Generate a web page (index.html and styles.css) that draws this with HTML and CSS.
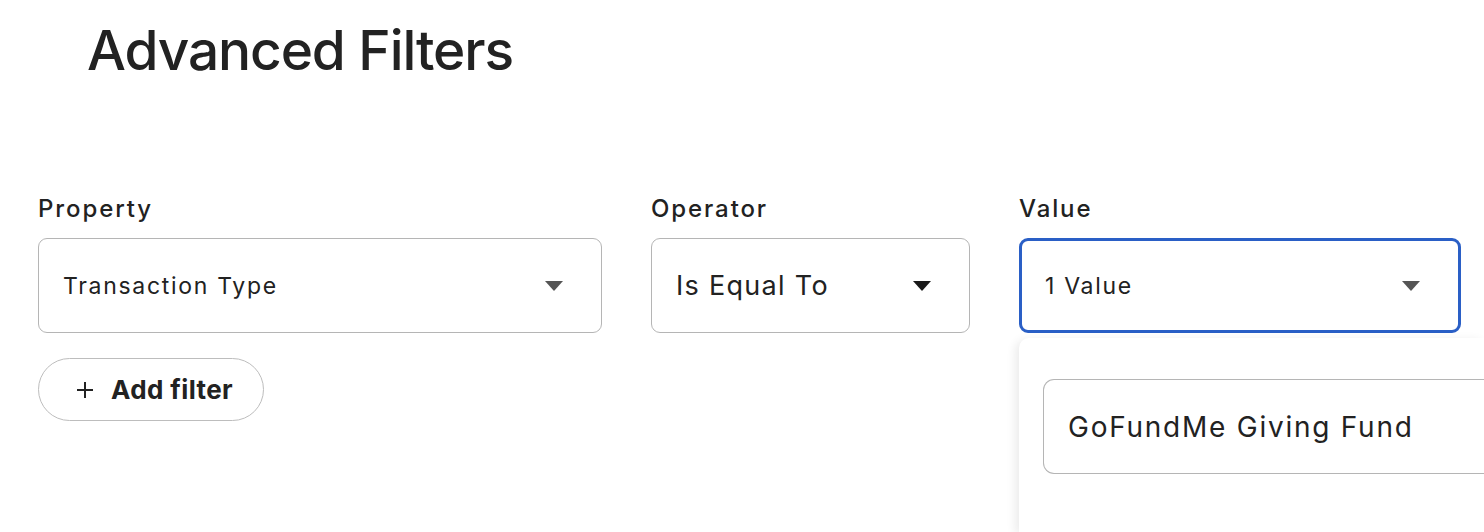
FILE: index.html
```html
<!DOCTYPE html>
<html lang="en">

<head>
    <meta charset="UTF-8">
    <meta name="viewport" content="width=device-width, initial-scale=1.0">
    <title>Advanced Filters</title>
    <link rel="stylesheet" href="styles.css">
</head>

<body>
    <div class="page">
        <h1 class="title">Advanced Filters</h1>

        <!-- Filter row -->
        <div class="filter-row">
            <div class="field field-property">
                <label>Property</label>
                <div class="select">
                    <span class="select-text">Transaction Type</span>
                    <span class="caret"></span>
                </div>
            </div>

            <div class="field field-operator">
                <label>Operator</label>
                <div class="select">
                    <span class="select-text large">Is Equal To</span>
                    <span class="caret dark"></span>
                </div>
            </div>

            <div class="field field-value">
                <label>Value</label>
                <div class="select active">
                    <span class="select-text">1 Value</span>
                    <span class="caret"></span>
                </div>

                <!-- Open dropdown -->
                <div class="dropdown">
                    <div class="dropdown-input">GoFundMe Giving Fund</div>
                </div>
            </div>
        </div>

        <button class="add-filter">
            <svg class="plus" width="16" height="16" viewBox="0 0 16 16">
                <path d="M8 0V16M0 8H16" stroke="#222" stroke-width="2" fill="none" />
            </svg>
            <span>Add filter</span>
        </button>
    </div>
</body>

</html>
```

FILE: styles.css
```css
/* General */
body {
    margin: 0;
    font-family: Inter, "Noto Sans", sans-serif;
    color: #222;
    background: #fff;
}

.page {
    box-sizing: border-box;
    height: 532px;
    padding: 0 0 0 38px;
    overflow: hidden;
}

/* Title */
.title {
    margin: 0 0 0 49px;
    font-size: 55px;
    font-weight: 500;
    line-height: 100px;
    height: 100px;
    letter-spacing: -1.1px;
}

/* Filter row */
.filter-row {
    display: flex;
    gap: 49px;
    margin-top: 90px;
}

.field {
    display: flex;
    flex-direction: column;
}

.field-property { width: 564px; }
.field-operator { width: 319px; }
.field-value { width: 442px; position: relative; }

label {
    font-size: 24px;
    font-weight: 500;
    line-height: 38px;
    height: 38px;
    margin-bottom: 10px;
    letter-spacing: 1.9px;
}

/* Select box */
.select {
    box-sizing: border-box;
    height: 95px;
    border: 1.5px solid #b5b5b5;
    border-radius: 9px;
    display: flex;
    align-items: center;
    justify-content: space-between;
    padding: 0 38px 0 24px;
}

.select.active {
    border: 3px solid #2a5fc6;
    padding: 0 38px 0 23px;
}

.select-text {
    font-size: 23px;
    color: #222;
    letter-spacing: 1.7px;
}

.select-text.large {
    font-size: 27px;
    letter-spacing: 1.3px;
}

.caret {
    width: 0;
    height: 0;
    border-left: 9.5px solid transparent;
    border-right: 9.5px solid transparent;
    border-top: 10px solid #555;
}

.caret.dark {
    border-top-color: #1a1a1a;
}

/* Dropdown */
.dropdown {
    position: absolute;
    top: 148px;
    left: 0;
    width: 465px;
    height: 194px;
    background: #fff;
    border-radius: 10px 0 0 0;
    box-shadow: -4px 2px 10px rgba(0, 0, 0, 0.08);
    padding: 41px 0 0 24px;
    box-sizing: border-box;
}

.dropdown-input {
    box-sizing: border-box;
    height: 95px;
    border: 1.5px solid #b5b5b5;
    border-right: none;
    border-radius: 11px 0 0 11px;
    display: flex;
    align-items: center;
    padding-left: 24px;
    font-size: 28px;
    color: #222;
    letter-spacing: 1.75px;
}

/* Add filter button */
.add-filter {
    margin-top: 25px;
    width: 226px;
    height: 63px;
    box-sizing: border-box;
    border: 1.5px solid #bdbdbd;
    border-radius: 32px;
    background: #fff;
    font-family: inherit;
    font-size: 26px;
    font-weight: 700;
    letter-spacing: 0.4px;
    color: #222;
    display: flex;
    align-items: center;
    justify-content: center;
    gap: 18px;
    padding: 0 0 0 8px;
    cursor: pointer;
}

.plus {
    flex-shrink: 0;
}
```
